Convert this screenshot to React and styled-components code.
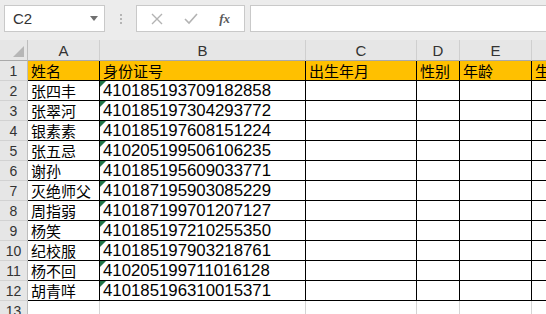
import React from "react"
import styled, { createGlobalStyle } from "styled-components"

const cjk = `"Noto Sans CJK SC", "Liberation Sans", sans-serif`
const latin = `"Liberation Sans", "Noto Sans CJK SC", sans-serif`

const GlobalStyle = createGlobalStyle`
  html, body {
    margin: 0;
    padding: 0;
    background: #ffffff;
    overflow: hidden;
  }
`

const Page = styled.div`
  width: 546px;
  height: 314px;
  overflow: hidden;
  background: #ffffff;
  font-family: ${latin};
`

const Toolbar = styled.div`
  height: 40px;
  box-sizing: border-box;
  padding: 5px 0 0 4px;
  display: flex;
  align-items: flex-start;
  background: #ececec;
`

const NameBox = styled.div`
  width: 101px;
  height: 27px;
  box-sizing: border-box;
  border: 1px solid #c9c9c9;
  background: #ffffff;
  display: flex;
  align-items: center;
  justify-content: space-between;
  padding: 0 6px 0 8px;
  font-size: 15px;
  color: #333333;
`

const Caret = styled.span`
  width: 0;
  height: 0;
  border-left: 4px solid transparent;
  border-right: 4px solid transparent;
  border-top: 5px solid #707070;
`

const Grip = styled.div`
  width: 31px;
  height: 27px;
  display: flex;
  flex-direction: column;
  align-items: center;
  justify-content: center;
  gap: 2px;

  span {
    width: 2px;
    height: 2px;
    background: #b5b5b5;
  }
`

const FormulaButtons = styled.div`
  width: 109px;
  height: 27px;
  box-sizing: border-box;
  border: 1px solid #c9c9c9;
  background: #ffffff;
  display: flex;
  align-items: center;
  justify-content: space-between;
  padding: 0 14px 0 14px;
`

const Fx = styled.span`
  font-family: "Liberation Serif", serif;
  font-style: italic;
  font-weight: bold;
  font-size: 13px;
  color: #5a5a5a;
`

const FormulaInput = styled.div`
  flex: 1;
  height: 27px;
  box-sizing: border-box;
  margin-left: 5px;
  border: 1px solid #c9c9c9;
  border-right: none;
  background: #ffffff;
`

const Sheet = styled.div`
  display: grid;
  grid-template-columns: 28px 72px 206px 111px 43px 72px 100px;
  grid-template-rows: 21px repeat(13, 20px);
`

const Corner = styled.div`
  background: #e6e6e6;
  box-sizing: border-box;
  border-right: 1px solid #bdbdbd;
  border-bottom: 1px solid #a9a9a9;
  display: flex;
  justify-content: flex-end;
  align-items: flex-end;
  padding: 0 3px 3px 0;

  span {
    width: 0;
    height: 0;
    border-left: 11px solid transparent;
    border-bottom: 11px solid #b6b6b6;
  }
`

const ColHead = styled.div`
  background: #e6e6e6;
  box-sizing: border-box;
  border-right: 1px solid #cfcfcf;
  border-bottom: 1px solid #a9a9a9;
  display: flex;
  align-items: flex-end;
  justify-content: center;
  padding-bottom: 1px;
  font-size: 15px;
  color: #333333;
`

const RowHead = styled.div`
  background: #e6e6e6;
  box-sizing: border-box;
  border-right: 1px solid #bdbdbd;
  border-bottom: 1px solid #d2d2d2;
  display: flex;
  align-items: center;
  justify-content: center;
  font-size: 14px;
  color: #333333;
`

const Cell = styled.div`
  position: relative;
  box-sizing: border-box;
  overflow: hidden;
  white-space: nowrap;
  border-right: 1px solid ${(p) => (p.$plain ? "#d4d4d4" : "#000000")};
  border-bottom: 1px solid ${(p) => (p.$plain ? "#d4d4d4" : "#000000")};
  background: ${(p) => (p.$head ? "#ffc000" : "#ffffff")};
  display: flex;
  align-items: center;
  padding-left: 3px;
  font-family: ${(p) => (p.$num ? latin : cjk)};
  font-size: ${(p) => (p.$num ? "16.8px" : "15px")};
  color: #000000;

  &::before {
    content: "";
    display: ${(p) => (p.$flag ? "block" : "none")};
    position: absolute;
    left: 0;
    top: 0;
    width: 0;
    height: 0;
    border-top: 6px solid #217346;
    border-right: 6px solid transparent;
  }
`

const columns = ["A", "B", "C", "D", "E", "F"]
const header = ["姓名", "身份证号", "出生年月", "性别", "年龄", "生肖"]

const people = [
  ["张四丰", "410185193709182858"],
  ["张翠河", "410185197304293772"],
  ["银素素", "410185197608151224"],
  ["张五忌", "410205199506106235"],
  ["谢孙", "410185195609033771"],
  ["灭绝师父", "410187195903085229"],
  ["周指弱", "410187199701207127"],
  ["杨笑", "410185197210255350"],
  ["纪校服", "410185197903218761"],
  ["杨不回", "410205199711016128"],
  ["胡青咩", "410185196310015371"],
]

const App = () => {
  return (
    <>
      <GlobalStyle />
      <Page>
        <Toolbar>
          <NameBox>
            C2
            <Caret />
          </NameBox>
          <Grip>
            <span />
            <span />
            <span />
          </Grip>
          <FormulaButtons>
            <svg width="12" height="12" viewBox="0 0 12 12">
              <path d="M1 1 L11 11 M11 1 L1 11" stroke="#b3b3b3" strokeWidth="1.4" fill="none" />
            </svg>
            <svg width="14" height="12" viewBox="0 0 14 12">
              <path d="M1 6 L5 10 L13 1" stroke="#b3b3b3" strokeWidth="1.6" fill="none" />
            </svg>
            <Fx>fx</Fx>
          </FormulaButtons>
          <FormulaInput />
        </Toolbar>

        <Sheet>
          <Corner>
            <span />
          </Corner>
          {columns.map((c) => (
            <ColHead key={c}>{c}</ColHead>
          ))}

          <RowHead>1</RowHead>
          {header.map((h) => (
            <Cell key={h} $head>
              {h}
            </Cell>
          ))}

          {people.map(([name, id], i) => (
            <React.Fragment key={id}>
              <RowHead>{i + 2}</RowHead>
              <Cell>{name}</Cell>
              <Cell $num $flag>
                {id}
              </Cell>
              <Cell />
              <Cell />
              <Cell />
              <Cell />
            </React.Fragment>
          ))}

          <RowHead>13</RowHead>
          {columns.map((c) => (
            <Cell key={c} $plain />
          ))}
        </Sheet>
      </Page>
    </>
  )
}

export default App
